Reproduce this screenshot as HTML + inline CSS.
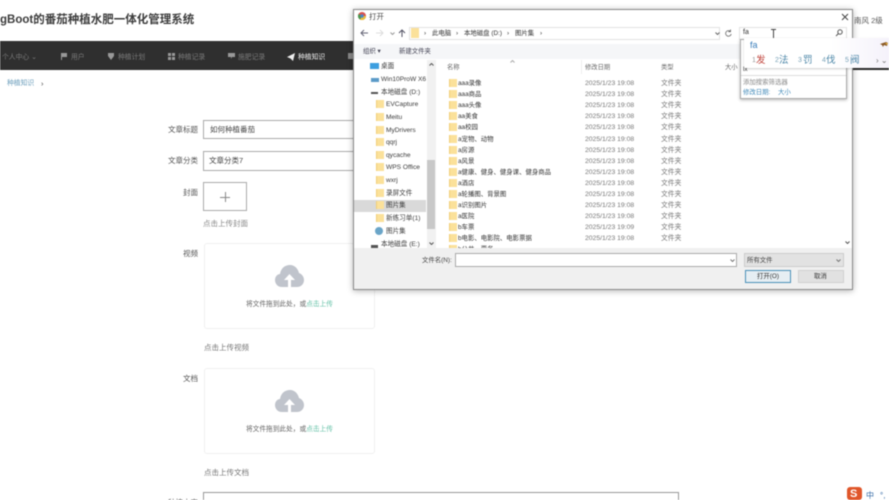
<!DOCTYPE html>
<html lang="zh"><head><meta charset="utf-8"><style>
html,body{margin:0;padding:0;background:#fff}
body{width:889px;height:500px;overflow:hidden;position:relative;font-family:"Liberation Sans","Noto Sans CJK SC",sans-serif;color:#555}
#w{position:absolute;left:0;top:0;width:889px;height:500px;overflow:hidden;filter:blur(.45px)}
.t{position:absolute;white-space:nowrap;font-size:7.5px;line-height:10px;margin-top:1px}
.n{font-size:6.8px;color:#7a7a7a}
.d{font-size:6.4px;color:#333}
.s{font-size:6.6px;color:#3c3c3c}
.m{font-size:6.8px;color:#777}
.h{font-size:6.300px;color:#666}
.c{font-size:9.5px;line-height:12px;color:#4d87a8}
.k{font-size:7px;line-height:12px;color:#7aa3b8}
.box{position:absolute;box-sizing:border-box;background:#fff}
.f{position:absolute;width:7px;height:8px;background:#fbe19a;border-left:1px solid #f2cf78}
svg{position:absolute}
</style></head><body><div id="w">

<div class="t" style="left:0;top:12px;font-size:11.5px;line-height:15px;font-weight:bold;color:#3c3c3c">gBoot的番茄种植水肥一体化管理系统</div>
<div class="box" style="left:0;top:41px;width:889px;height:29px;background:#2f2f2f"></div>
<div class="t n" style="left:2px;top:52px">个人中心 ⌄</div>
<svg style="left:61px;top:53px" width="6" height="7"><path d="M0 0H6V4H1V7H0Z" fill="#999"/></svg>
<div class="t n" style="left:71px;top:52px">用户</div>
<svg style="left:108px;top:53px" width="6" height="7"><path d="M0 0H6V3L3 7L0 3Z" fill="#999"/></svg>
<div class="t n" style="left:118px;top:52px">种植计划</div>
<svg style="left:168px;top:53px" width="7" height="7"><path d="M0 0H3V3H0ZM4 0H7V3H4ZM0 4H3V7H0ZM4 4H7V7H4Z" fill="#999"/></svg>
<div class="t n" style="left:178px;top:52px">种植记录</div>
<svg style="left:228px;top:53px" width="7" height="6"><path d="M0 0H7V4H4L3 6V4H0Z" fill="#999"/></svg>
<div class="t n" style="left:238px;top:52px">施肥记录</div>
<svg style="left:287px;top:53px" width="8" height="8"><path d="M0 4L8 0L6 8L3.500 5.500Z" fill="#eee"/></svg>
<div class="t n" style="left:298px;top:52px;color:#eee">种植知识</div>
<div class="box" style="left:348px;top:53px;width:5px;height:6px;background:#888"></div>
<div class="t n" style="left:7px;top:78px;color:#6a9dbb">种植知识</div>
<div class="t" style="left:41px;top:78px;color:#444">›</div>
<div class="t" style="left:854px;top:15px;color:#555">南风 2级</div>

<div class="t" style="left:168px;top:124px">文章标题</div>
<div class="box" style="left:203px;top:120px;width:160px;height:19px;border:1px solid #aaa"></div>
<div class="t" style="left:210px;top:124px;color:#444">如何种植番茄</div>
<div class="t" style="left:168px;top:155px">文章分类</div>
<div class="box" style="left:203px;top:151px;width:160px;height:20px;border:1px solid #aaa"></div>
<div class="t" style="left:209px;top:155px;color:#444">文章分类7</div>
<div class="t" style="left:183px;top:187px">封面</div>
<div class="box" style="left:203px;top:182px;width:44px;height:29px;border:1px solid #aaa"></div>
<div class="box" style="left:220px;top:197px;width:10px;height:1px;background:#888"></div>
<div class="box" style="left:225px;top:192px;width:1px;height:10px;background:#888"></div>
<div class="t" style="left:203px;top:218px;color:#888">点击上传封面</div>

<div class="t" style="left:183px;top:248px">视频</div>
<div class="box" style="left:204px;top:243px;width:171px;height:86px;border:1px solid #f0f0f0;border-radius:3px"></div>
<svg style="left:275px;top:264px" width="29" height="24"><path d="M7 23C2 23 0 19 0 16C0 12 3 10 5 10C6 4 10 1 15 1C20 1 23 5 24 9C27 10 29 13 29 16C29 20 26 23 22 23Z" fill="#c0c4cc"/><path d="M14.500 10L20 16H16V24H13V16H9Z" fill="#fff"/></svg>
<div class="t" style="left:246px;top:299px;font-size:6.700px;color:#666">将文件拖到此处，或<span style="color:#66c2a8">点击上传</span></div>
<div class="t" style="left:204px;top:342px;color:#777">点击上传视频</div>

<div class="t" style="left:183px;top:373px">文档</div>
<div class="box" style="left:204px;top:368px;width:171px;height:86px;border:1px solid #f0f0f0;border-radius:3px"></div>
<svg style="left:275px;top:389px" width="29" height="24"><path d="M7 23C2 23 0 19 0 16C0 12 3 10 5 10C6 4 10 1 15 1C20 1 23 5 24 9C27 10 29 13 29 16C29 20 26 23 22 23Z" fill="#c0c4cc"/><path d="M14.500 10L20 16H16V24H13V16H9Z" fill="#fff"/></svg>
<div class="t" style="left:246px;top:424px;font-size:6.700px;color:#666">将文件拖到此处，或<span style="color:#66c2a8">点击上传</span></div>
<div class="t" style="left:204px;top:467px;color:#777">点击上传文档</div>
<div class="t" style="left:168px;top:497px">种植内容</div>
<div class="box" style="left:203px;top:492px;width:476px;height:20px;border:1px solid #999"></div>

<div class="box" style="left:353px;top:9px;width:500px;height:281px;background:#fff;border:1px solid #8a8a8a;box-shadow:0 1px 6px rgba(0,0,0,.3)"></div>
<svg style="left:358px;top:12px" width="8" height="8"><circle cx="4" cy="4" r="4" fill="#d9534f"/><path d="M4 4L8 4A4 4 0 0 1 2 7.500Z" fill="#e8c040"/><path d="M4 4L2 7.500A4 4 0 0 1 .5 2Z" fill="#4a9a50"/><circle cx="4" cy="4" r="1.700" fill="#4a86c8"/></svg>
<div class="t" style="left:369px;top:11px;color:#444">打开</div>
<svg style="left:841px;top:13px" width="8" height="8"><path d="M1 1L7 7M7 1L1 7" stroke="#444" stroke-width="1" fill="none"/></svg>

<svg style="left:360px;top:29px" width="8" height="8"><path d="M8 4H1M4 1L1 4L4 7" stroke="#667" fill="none"/></svg>
<svg style="left:376px;top:29px" width="8" height="8"><path d="M0 4H7M4 1L7 4L4 7" stroke="#ddd" fill="none"/></svg>
<svg style="left:390px;top:32px" width="5" height="3"><path d="M.5 .5L2.500 2.500L4.500 .5" stroke="#999" fill="none"/></svg>
<svg style="left:398px;top:29px" width="8" height="8"><path d="M4 8V1M1 4L4 1L7 4" stroke="#556" fill="none"/></svg>
<div class="box" style="left:409px;top:27px;width:311px;height:13px;border:1px solid #e2e2e2"></div>
<div class="box" style="left:411px;top:28px;width:8px;height:10px;background:#fbe19a"></div>
<div class="t d" style="left:432px;top:28px">此电脑</div>
<div class="t d" style="left:464px;top:28px">本地磁盘 (D:)</div>
<div class="t d" style="left:515px;top:28px">图片集</div>
<div class="t d" style="left:424px;top:28px">›</div>
<div class="t d" style="left:456px;top:28px">›</div>
<div class="t d" style="left:507px;top:28px">›</div>
<div class="t d" style="left:540px;top:28px">›</div>
<svg style="left:715px;top:32px" width="5" height="3"><path d="M.5 .5L2.500 2.500L4.500 .5" stroke="#666" fill="none"/></svg>
<svg style="left:725px;top:29px" width="7" height="8"><path d="M5.500 2.500A2.800 2.800 0 1 0 6.200 5M5.500 .5V2.700H3.300" stroke="#666" fill="none" stroke-width=".8"/></svg>
<div class="box" style="left:739px;top:27px;width:108px;height:13px;border:1px solid #e2e2e2"></div>
<div class="t" style="left:743px;top:27px;font-size:7px;color:#333">fa</div>
<svg style="left:770px;top:29px" width="7" height="10"><path d="M1 .5H6M3.500 .5V9.500M1 9.500H6" stroke="#444" fill="none"/></svg>
<svg style="left:835px;top:29px" width="8" height="8"><circle cx="5" cy="3" r="2.200" stroke="#555" fill="none"/><path d="M3.500 4.500L1 7" stroke="#555"/></svg>

<div class="box" style="left:354px;top:44px;width:498px;height:15px;background:#f5f6f8"></div>
<div class="t d" style="left:363px;top:46px;color:#445">组织 ▾</div>
<div class="t d" style="left:399px;top:46px;color:#445">新建文件夹</div>

<div class="box" style="left:427px;top:60px;width:9px;height:191px;background:#f1f1f1"></div>
<div class="box" style="left:427px;top:160px;width:8px;height:69px;background:#c8c8c8"></div>
<svg style="left:429px;top:63px" width="5" height="3"><path d="M.5 2.500L2.500 .5L4.500 2.500" stroke="#555" fill="none"/></svg>
<svg style="left:429px;top:242px" width="5" height="3"><path d="M.5 .5L2.500 2.500L4.500 .5" stroke="#555" fill="none"/></svg>
<div class="box" style="left:354px;top:200px;width:72px;height:12px;background:#d9d9d9"></div>

<div class="box" style="left:370px;top:63px;width:9px;height:6px;background:#3d9fe0"></div>
<div class="t s" style="left:381px;top:61px">桌面</div>
<div class="box" style="left:371px;top:78px;width:8px;height:4px;background:#5b9bc8"></div>
<div class="t s" style="left:381px;top:74px">Win10ProW X6</div>
<div class="box" style="left:371px;top:92px;width:7px;height:2px;background:#555"></div>
<div class="t s" style="left:381px;top:87px">本地磁盘 (D:)</div>
<div class="f" style="left:376px;top:100px"></div><div class="t s" style="left:386px;top:99px">EVCapture</div>
<div class="f" style="left:376px;top:113px"></div><div class="t s" style="left:386px;top:112px">Meitu</div>
<div class="f" style="left:376px;top:126px"></div><div class="t s" style="left:386px;top:125px">MyDrivers</div>
<div class="f" style="left:376px;top:138px"></div><div class="t s" style="left:386px;top:137px">qqrj</div>
<div class="f" style="left:376px;top:151px"></div><div class="t s" style="left:386px;top:150px">qycache</div>
<div class="f" style="left:376px;top:163px"></div><div class="t s" style="left:386px;top:162px">WPS Office</div>
<div class="f" style="left:376px;top:176px"></div><div class="t s" style="left:386px;top:175px">wxrj</div>
<div class="f" style="left:376px;top:189px"></div><div class="t s" style="left:386px;top:188px">录屏文件</div>
<div class="f" style="left:376px;top:201px"></div><div class="t s" style="left:386px;top:200px">图片集</div>
<div class="f" style="left:376px;top:214px"></div><div class="t s" style="left:386px;top:213px">新练习单(1)</div>
<div class="box" style="left:375px;top:227px;width:8px;height:8px;border-radius:50%;background:#6aa5c8"></div><div class="t s" style="left:386px;top:226px">图片集</div>
<div class="box" style="left:371px;top:245px;width:7px;height:3px;background:#555"></div><div class="t s" style="left:381px;top:239px">本地磁盘 (E:)</div>

<div class="t h" style="left:447px;top:62px">名称</div>
<div class="t h" style="left:585px;top:62px">修改日期</div>
<div class="t h" style="left:661px;top:62px">类型</div>
<div class="t h" style="left:725px;top:62px">大小</div>
<svg style="left:510px;top:60px" width="5" height="3"><path d="M.5 2.500L2.500 .5L4.500 2.500" stroke="#aaa" fill="none"/></svg>
<div class="box" style="left:581px;top:60px;width:1px;height:14px;background:#eee"></div>

<div class="f" style="left:449px;top:79px"></div><div class="t d" style="left:458px;top:78px">aaa录像</div><div class="t m" style="left:585px;top:78px">2025/1/23 19:08</div><div class="t m" style="left:661px;top:78px">文件夹</div>
<div class="f" style="left:449px;top:90px"></div><div class="t d" style="left:458px;top:89px">aaa商品</div><div class="t m" style="left:585px;top:89px">2025/1/23 19:08</div><div class="t m" style="left:661px;top:89px">文件夹</div>
<div class="f" style="left:449px;top:101px"></div><div class="t d" style="left:458px;top:100px">aaa头像</div><div class="t m" style="left:585px;top:100px">2025/1/23 19:08</div><div class="t m" style="left:661px;top:100px">文件夹</div>
<div class="f" style="left:449px;top:112px"></div><div class="t d" style="left:458px;top:111px">aa美食</div><div class="t m" style="left:585px;top:111px">2025/1/23 19:08</div><div class="t m" style="left:661px;top:111px">文件夹</div>
<div class="f" style="left:449px;top:123px"></div><div class="t d" style="left:458px;top:122px">aa校园</div><div class="t m" style="left:585px;top:122px">2025/1/23 19:08</div><div class="t m" style="left:661px;top:122px">文件夹</div>
<div class="f" style="left:449px;top:135px"></div><div class="t d" style="left:458px;top:134px">a宠物、动物</div><div class="t m" style="left:585px;top:134px">2025/1/23 19:08</div><div class="t m" style="left:661px;top:134px">文件夹</div>
<div class="f" style="left:449px;top:146px"></div><div class="t d" style="left:458px;top:145px">a房源</div><div class="t m" style="left:585px;top:145px">2025/1/23 19:08</div><div class="t m" style="left:661px;top:145px">文件夹</div>
<div class="f" style="left:449px;top:157px"></div><div class="t d" style="left:458px;top:156px">a风景</div><div class="t m" style="left:585px;top:156px">2025/1/23 19:08</div><div class="t m" style="left:661px;top:156px">文件夹</div>
<div class="f" style="left:449px;top:168px"></div><div class="t d" style="left:458px;top:167px">a健康、健身、健身课、健身商品</div><div class="t m" style="left:585px;top:167px">2025/1/23 19:08</div><div class="t m" style="left:661px;top:167px">文件夹</div>
<div class="f" style="left:449px;top:179px"></div><div class="t d" style="left:458px;top:178px">a酒店</div><div class="t m" style="left:585px;top:178px">2025/1/23 19:08</div><div class="t m" style="left:661px;top:178px">文件夹</div>
<div class="f" style="left:449px;top:190px"></div><div class="t d" style="left:458px;top:189px">a轮播图、背景图</div><div class="t m" style="left:585px;top:189px">2025/1/23 19:08</div><div class="t m" style="left:661px;top:189px">文件夹</div>
<div class="f" style="left:449px;top:201px"></div><div class="t d" style="left:458px;top:200px">a识别图片</div><div class="t m" style="left:585px;top:200px">2025/1/23 19:08</div><div class="t m" style="left:661px;top:200px">文件夹</div>
<div class="f" style="left:449px;top:212px"></div><div class="t d" style="left:458px;top:211px">a医院</div><div class="t m" style="left:585px;top:211px">2025/1/23 19:08</div><div class="t m" style="left:661px;top:211px">文件夹</div>
<div class="f" style="left:449px;top:223px"></div><div class="t d" style="left:458px;top:222px">b车票</div><div class="t m" style="left:585px;top:222px">2025/1/23 19:09</div><div class="t m" style="left:661px;top:222px">文件夹</div>
<div class="f" style="left:449px;top:234px"></div><div class="t d" style="left:458px;top:233px">b电影、电影院、电影票据</div><div class="t m" style="left:585px;top:233px">2025/1/23 19:08</div><div class="t m" style="left:661px;top:233px">文件夹</div>
<div class="f" style="left:449px;top:245px"></div><div class="t d" style="left:458px;top:244px">b公共、票务</div>
<svg style="left:845px;top:241px" width="5" height="3"><path d="M.5 .5L2.500 2.500L4.500 .5" stroke="#555" fill="none"/></svg>

<div class="box" style="left:354px;top:248px;width:498px;height:41px;background:#f0f0f0"></div>
<div class="t d" style="left:422px;top:255px;color:#444">文件名(N):</div>
<div class="box" style="left:455px;top:253px;width:282px;height:14px;background:#fff;border:1px solid #aaa"></div>
<svg style="left:730px;top:259px" width="5" height="3"><path d="M.5 .5L2.500 2.500L4.500 .5" stroke="#777" fill="none"/></svg>
<div class="box" style="left:744px;top:253px;width:100px;height:14px;background:#e2e2e2;border:1px solid #ccc"></div>
<div class="t d" style="left:747px;top:255px;color:#444">所有文件</div>
<svg style="left:836px;top:259px" width="5" height="3"><path d="M.5 .5L2.500 2.500L4.500 .5" stroke="#777" fill="none"/></svg>
<div class="box" style="left:745px;top:270px;width:46px;height:13px;background:#e6eef3;border:1px solid #4a90b8"></div>
<div class="t d" style="left:757px;top:271px">打开(O)</div>
<div class="box" style="left:798px;top:270px;width:46px;height:13px;background:#e1e1e1;border:1px solid #d0d0d0"></div>
<div class="t d" style="left:814px;top:271px">取消</div>

<div class="box" style="left:740px;top:39px;width:107px;height:60px;background:#fff;border:1px solid #aaa;box-shadow:0 1px 3px rgba(0,0,0,.3)"></div>
<div class="t d" style="left:743px;top:64px;color:#444">lx</div>
<div class="box" style="left:741px;top:75px;width:105px;height:1px;background:#ddd"></div>
<div class="t d" style="left:743px;top:77px;color:#888">添加搜索筛选器</div>
<div class="t d" style="left:743px;top:87px;color:#3f88b8">修改日期:</div>
<div class="t d" style="left:778px;top:87px;color:#3f88b8">大小</div>

<div class="box" style="left:744px;top:38px;width:145px;height:30px;background:linear-gradient(90deg,#fff 60%,#f5f2fb);box-shadow:0 1px 2px rgba(0,0,0,.2)"></div>
<div class="t" style="left:750px;top:39px;font-size:9px;color:#3a7ebb">fa</div>
<div class="t k" style="left:752px;top:54px;color:#999">1</div>
<div class="t c" style="left:756px;top:54px;color:#c0443c">发</div>
<div class="t k" style="left:775px;top:54px">2</div>
<div class="t c" style="left:779px;top:54px">法</div>
<div class="t k" style="left:798px;top:54px">3</div>
<div class="t c" style="left:803px;top:54px">罚</div>
<div class="t k" style="left:822px;top:54px">4</div>
<div class="t c" style="left:826px;top:54px">伐</div>
<div class="t k" style="left:845px;top:54px">5</div>
<div class="t c" style="left:850px;top:54px">阀</div>
<div class="t" style="left:876px;top:55px;font-size:8px;color:#777">› ⌄</div>
<svg style="left:880px;top:42px" width="8" height="6"><path d="M0 2L6 0L8 1L7 4L4 3L3 5L2 3Z" fill="#8a5a28"/><path d="M5 1L8 1L7 3Z" fill="#e0b040"/></svg>

<div class="box" style="left:847px;top:487px;width:15px;height:13px;background:#e0562a;border-radius:3px"></div>
<div class="t" style="left:850px;top:487px;font-size:11px;line-height:12px;font-weight:bold;color:#fff">S</div>
<div class="t" style="left:866px;top:490px;font-size:8px;color:#3a6ea8">中</div>
<div class="t" style="left:880px;top:490px;font-size:8px;color:#3a6ea8">°,</div>

</div></body></html>
